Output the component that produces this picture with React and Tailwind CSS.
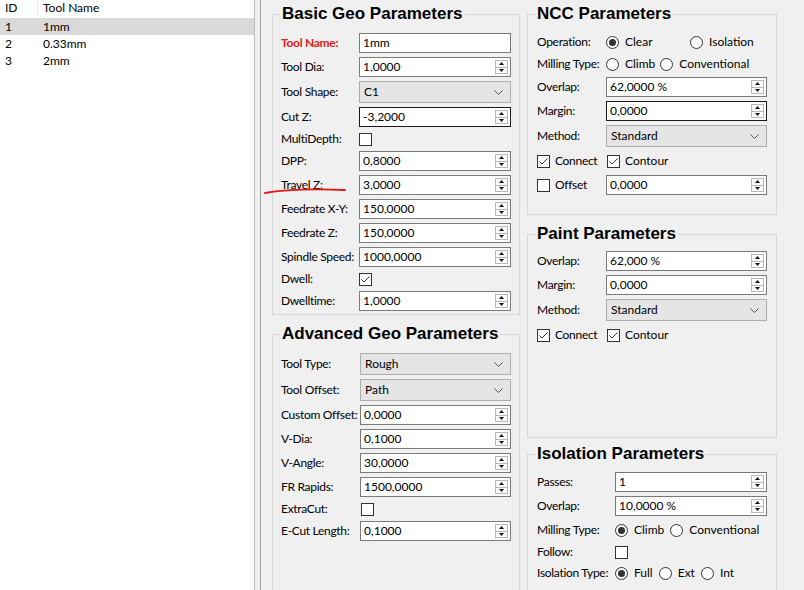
import React from 'react'

// Small building blocks imitating the Qt / Windows widgets

const SpinButtons = () => (
  <div className="flex flex-col h-full w-[15px] py-[2px] pr-[2px]">
    <div className="flex-1 flex items-center justify-center border border-[#b9b9b9] bg-[#fafafa]">
      <svg width="5" height="3" viewBox="0 0 5 3"><polygon points="2.5,0 5,3 0,3" fill="#111" /></svg>
    </div>
    <div className="flex-1 flex items-center justify-center border border-t-0 border-[#b9b9b9] bg-[#fafafa]">
      <svg width="5" height="3" viewBox="0 0 5 3"><polygon points="0,0 5,0 2.5,3" fill="#111" /></svg>
    </div>
  </div>
)

const Spin = ({ value, dark = false, className = '' }) => (
  <div className={`flex items-center h-[20px] bg-white border ${dark ? 'border-[#1a1a1a]' : 'border-[#7a7a7a]'} ${className}`}>
    <span className="flex-1 pl-[3px] whitespace-nowrap overflow-hidden">{value}</span>
    <SpinButtons />
  </div>
)

const TextBox = ({ value, className = '' }) => (
  <div className={`flex items-center h-[20px] bg-white border border-[#7a7a7a] pl-[3px] ${className}`}>
    {value}
  </div>
)

const Combo = ({ value, className = '' }) => (
  <div className={`flex items-center justify-between h-[22px] bg-[#e5e5e5] border border-[#adadad] pl-[4px] pr-[7px] ${className}`}>
    <span>{value}</span>
    <svg width="9" height="5" viewBox="0 0 9 5">
      <polyline points="0.5,0.5 4.5,4.5 8.5,0.5" fill="none" stroke="#555" strokeWidth="1" />
    </svg>
  </div>
)

const Check = ({ checked = false }) => (
  <div className="w-[13px] h-[13px] shrink-0 border border-[#333] bg-white flex items-center justify-center">
    {checked && (
      <svg width="11" height="11" viewBox="0 0 11 11">
        <polyline points="1.5,5.5 4,8 9.5,2.5" fill="none" stroke="#333" strokeWidth="1" />
      </svg>
    )}
  </div>
)

const Radio = ({ checked = false, label, className = '' }) => (
  <div className={`flex items-center ${className}`}>
    <div className="w-[13px] h-[13px] shrink-0 rounded-full border border-[#333] bg-white flex items-center justify-center">
      {checked && <div className="w-[7px] h-[7px] rounded-full bg-[#333]" />}
    </div>
    <span className="ml-[6px] whitespace-nowrap">{label}</span>
  </div>
)

const CheckItem = ({ checked, label, className = '' }) => (
  <div className={`flex items-center ${className}`}>
    <Check checked={checked} />
    <span className="ml-[5px] whitespace-nowrap">{label}</span>
  </div>
)

const Group = ({ title, className = '', children }) => (
  <fieldset className={`shrink-0 border border-[#d7d7d7] px-[7px] ${className}`}>
    <legend className="px-[2px] text-[17px] leading-[20px] font-bold text-black font-['Liberation_Sans',Arial,sans-serif]">
      {title}
    </legend>
    {children}
  </fieldset>
)

const Row = ({ label, labelW, h = 'h-[20px]', labelClass = '', children }) => (
  <div className={`flex items-center ${h}`}>
    <div className={`shrink-0 whitespace-nowrap tracking-[-0.3px] ${labelClass}`} style={{ width: labelW }}>{label}</div>
    {children}
  </div>
)

const tools = [
  { id: 1, name: '1mm', selected: true },
  { id: 2, name: '0.33mm' },
  { id: 3, name: '2mm' }
]

export default function App() {
  return (
    <div className="relative flex w-[804px] h-[590px] overflow-hidden bg-[#f0f0f0] text-[12px] text-black font-['Lato','Liberation_Sans',sans-serif]">
      {/* Tool table */}
      <div className="w-[255px] shrink-0 bg-white border-r border-[#bdbdbd]">
        <div className="flex h-[18px] pb-[2px]">
          <div className="w-[38px] pl-[5px] flex items-center border-r border-[#ececec]">ID</div>
          <div className="pl-[5px] flex items-center">Tool Name</div>
        </div>
        {tools.map((t) => (
          <div key={t.id} className={`flex items-center h-[17px] ${t.selected ? 'bg-[#d9d9d9]' : ''}`}>
            <div className="w-[38px] pl-[5px]">{t.id}</div>
            <div className="pl-[5px]">{t.name}</div>
          </div>
        ))}
      </div>

      <div className="w-[5px] shrink-0" />

      {/* Parameters */}
      <div className="flex-1 flex border-l border-[#a0a0a0] pl-[11px] pt-[4px] gap-[7px]">
        <div className="w-[248px] shrink-0 flex flex-col">
          <Group title="Basic Geo Parameters" className="h-[311px]">
            <div className="flex flex-col gap-[4px] pt-[9px]">
              <Row label="Tool Name:" labelW={79} labelClass="pl-[1px] font-bold text-[#e0201c]">
                <TextBox value="1mm" className="w-[152px]" />
              </Row>
              <Row label="Tool Dia:" labelW={79} labelClass="pl-[1px]"><Spin value="1,0000" className="w-[152px]" /></Row>
              <Row label="Tool Shape:" labelW={79} labelClass="pl-[1px]" h="h-[22px]"><Combo value="C1" className="w-[152px]" /></Row>
              <Row label="Cut Z:" labelW={79} labelClass="pl-[1px]"><Spin value="-3,2000" dark className="w-[152px]" /></Row>
              <Row label="MultiDepth:" labelW={79} labelClass="pl-[1px]" h="h-[16px]"><Check /></Row>
              <Row label="DPP:" labelW={79} labelClass="pl-[1px]"><Spin value="0,8000" className="w-[152px]" /></Row>
              <Row label="Travel Z:" labelW={79} labelClass="pl-[1px]"><Spin value="3,0000" className="w-[152px]" /></Row>
              <Row label="Feedrate X-Y:" labelW={79} labelClass="pl-[1px]"><Spin value="150,0000" className="w-[152px]" /></Row>
              <Row label="Feedrate Z:" labelW={79} labelClass="pl-[1px]"><Spin value="150,0000" className="w-[152px]" /></Row>
              <Row label="Spindle Speed:" labelW={79} labelClass="pl-[1px]"><Spin value="1000,0000" className="w-[152px]" /></Row>
              <Row label="Dwell:" labelW={79} labelClass="pl-[1px]" h="h-[16px]"><Check checked /></Row>
              <Row label="Dwelltime:" labelW={79} labelClass="pl-[1px]"><Spin value="1,0000" className="w-[152px]" /></Row>
            </div>
          </Group>

          <Group title="Advanced Geo Parameters" className="h-[300px] mt-[9px]">
            <div className="flex flex-col gap-[4px] pt-[9px]">
              <Row label="Tool Type:" labelW={80} labelClass="pl-[1px]" h="h-[22px]"><Combo value="Rough" className="w-[151px]" /></Row>
              <Row label="Tool Offset:" labelW={80} labelClass="pl-[1px]" h="h-[22px]"><Combo value="Path" className="w-[151px]" /></Row>
              <Row label="Custom Offset:" labelW={80} labelClass="pl-[1px]"><Spin value="0,0000" className="w-[151px]" /></Row>
              <Row label="V-Dia:" labelW={80} labelClass="pl-[1px]"><Spin value="0,1000" className="w-[151px]" /></Row>
              <Row label="V-Angle:" labelW={80} labelClass="pl-[1px]"><Spin value="30,0000" className="w-[151px]" /></Row>
              <Row label="FR Rapids:" labelW={80} labelClass="pl-[1px]"><Spin value="1500,0000" className="w-[151px]" /></Row>
              <Row label="ExtraCut:" labelW={80} labelClass="pl-[1px]" h="h-[16px]"><div className="pl-[1px]"><Check /></div></Row>
              <Row label="E-Cut Length:" labelW={80} labelClass="pl-[1px]"><Spin value="0,1000" className="w-[151px]" /></Row>
            </div>
          </Group>
        </div>

        <div className="w-[250px] shrink-0 flex flex-col">
          <Group title="NCC Parameters" className="h-[211px]">
            <div className="flex flex-col gap-[4px] pt-[9px]">
              <Row label="Operation:" labelW={71} labelClass="pl-[2px]" h="h-[18px]">
                <Radio checked label="Clear" className="w-[84px]" />
                <Radio label="Isolation" />
              </Row>
              <Row label="Milling Type:" labelW={71} labelClass="pl-[2px]" h="h-[18px]">
                <Radio label="Climb" className="mr-[5px]" />
                <Radio label="Conventional" />
              </Row>
              <Row label="Overlap:" labelW={71} labelClass="pl-[2px]"><Spin value="62,0000 %" className="w-[161px]" /></Row>
              <Row label="Margin:" labelW={71} labelClass="pl-[2px]"><Spin value="0,0000" dark className="w-[161px]" /></Row>
              <Row label="Method:" labelW={71} labelClass="pl-[2px]" h="h-[22px]"><Combo value="Standard" className="w-[161px]" /></Row>
              <Row label={<CheckItem checked label="Connect" />} labelW={71} labelClass="pl-[2px]">
                <CheckItem checked label="Contour" className="pl-[1px]" />
              </Row>
              <Row label={<CheckItem label="Offset" />} labelW={71} labelClass="pl-[2px]">
                <Spin value="0,0000" className="w-[161px]" />
              </Row>
            </div>
          </Group>

          <Group title="Paint Parameters" className="h-[214px] mt-[9px]">
            <div className="flex flex-col gap-[4px] pt-[7px]">
              <Row label="Overlap:" labelW={71} labelClass="pl-[2px]"><Spin value="62,000 %" className="w-[161px]" /></Row>
              <Row label="Margin:" labelW={71} labelClass="pl-[2px]"><Spin value="0,0000" className="w-[161px]" /></Row>
              <Row label="Method:" labelW={71} labelClass="pl-[2px]" h="h-[22px]"><Combo value="Standard" className="w-[161px]" /></Row>
              <Row label={<CheckItem checked label="Connect" />} labelW={71} labelClass="pl-[2px]">
                <CheckItem checked label="Contour" className="pl-[1px]" />
              </Row>
            </div>
          </Group>

          <Group title="Isolation Parameters" className="h-[200px] mt-[6px]">
            <div className="flex flex-col gap-[4px] pt-[8px]">
              <Row label="Passes:" labelW={80} labelClass="pl-[2px]"><Spin value="1" className="w-[152px]" /></Row>
              <Row label="Overlap:" labelW={80} labelClass="pl-[2px]"><Spin value="10,0000 %" className="w-[152px]" /></Row>
              <Row label="Milling Type:" labelW={80} labelClass="pl-[2px]">
                <Radio checked label="Climb" className="mr-[6px]" />
                <Radio label="Conventional" />
              </Row>
              <Row label="Follow:" labelW={80} labelClass="pl-[2px]" h="h-[16px]"><Check /></Row>
              <Row label="Isolation Type:" labelW={80} labelClass="pl-[2px]" h="h-[18px]">
                <Radio checked label="Full" className="mr-[6px]" />
                <Radio label="Ext" className="mr-[6px]" />
                <Radio label="Int" />
              </Row>
            </div>
          </Group>
        </div>
      </div>

      {/* hand-drawn red mark under "Travel Z:" */}
      <svg className="absolute left-[262px] top-[184px] pointer-events-none" width="90" height="14" viewBox="0 0 90 14">
        <path d="M3 9 Q 30 4 83 6" fill="none" stroke="#e01818" strokeWidth="1.8" strokeLinecap="round" />
      </svg>
    </div>
  )
}
